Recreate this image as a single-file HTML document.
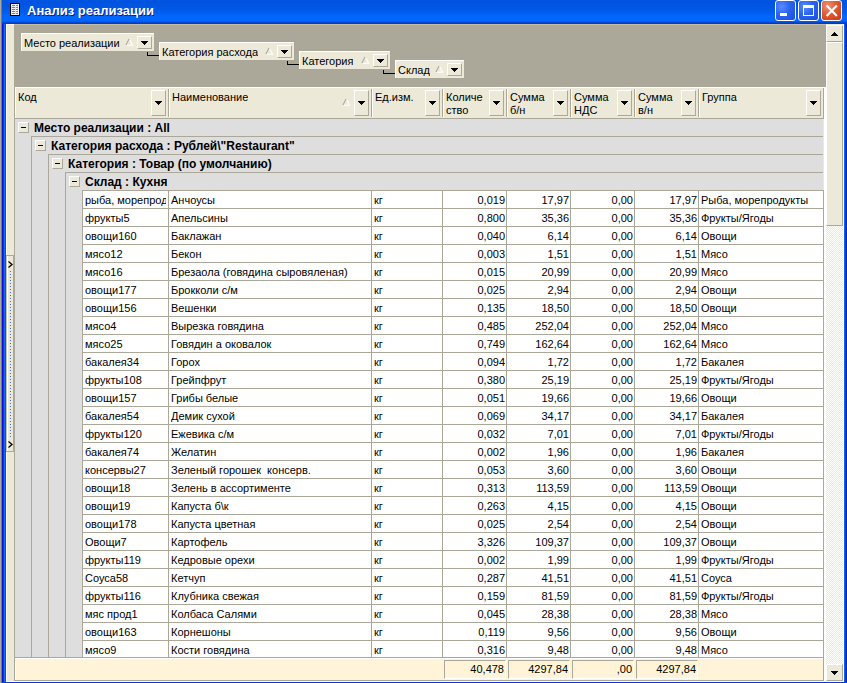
<!DOCTYPE html>
<html><head><meta charset="utf-8"><title>Анализ реализации</title>
<style>
html,body{margin:0;padding:0}
body{width:847px;height:683px;overflow:hidden;position:relative;background:#ACA899;font-family:"Liberation Sans",sans-serif;font-size:11px;color:#000}
.a{position:absolute}
.t{position:absolute;white-space:nowrap;overflow:hidden;line-height:12px;height:auto}
.title{font-weight:bold;font-size:13px;line-height:15px;letter-spacing:0px;color:#fff;text-shadow:1px 1px 0 #0A1E8C}
</style></head><body>
<div class="a" style="left:2px;top:0px;width:845px;height:683px;background:#0054E3"></div>
<div class="a" style="left:1px;top:0px;width:1px;height:683px;background:#807A62"></div>
<div class="a" style="left:2px;top:24px;width:1px;height:659px;background:#0414DC"></div>
<div class="a" style="left:3px;top:24px;width:1px;height:659px;background:#0838E4"></div>
<div class="a" style="left:4px;top:24px;width:1px;height:659px;background:#1868F2"></div>
<div class="a" style="left:5px;top:24px;width:1px;height:659px;background:#0650E0"></div>
<div class="a" style="left:844px;top:24px;width:1px;height:659px;background:#1464F4"></div>
<div class="a" style="left:845px;top:24px;width:1px;height:659px;background:#0840D8"></div>
<div class="a" style="left:846px;top:24px;width:1px;height:659px;background:#0A28A8"></div>
<div class="a" style="left:2px;top:682px;width:845px;height:1px;background:#0838D8"></div>
<div class="a" style="left:2px;top:0px;width:845px;height:24px;background:linear-gradient(to bottom,#0058E6 0px,#0053DE 1.5px,#0055E0 5px,#005EEE 13px,#0066FF 16px,#0066FF 21px,#0050E0 22px,#003EC8 23px,#003CC4 24px)"></div>
<svg class="a" style="left:10px;top:3px" width="10" height="13" viewBox="0 0 10 13" shape-rendering="crispEdges">
<rect x="0" y="0" width="10" height="13" fill="#000"/>
<rect x="1" y="1" width="8" height="11" fill="#FFFF00"/>
<rect x="8" y="1" width="1" height="11" fill="#FFF"/>
<path d="M1 2h1M3 2h1M5 2h1M7 2h1M2 1h1M4 1h1M6 1h1M2 3h1M4 3h1M6 3h1M2 5h1M4 5h1M6 5h1M2 7h1M4 7h1M6 7h1M2 9h1M4 9h1M6 9h1M2 11h1M4 11h1M6 11h1" stroke="#FFF" stroke-width="1" transform="translate(0,0.5)"/>
<path d="M2 2h3M6 2h2M2 4h3M6 4h2M2 6h3M6 6h2M2 8h3M6 8h2M2 10h3M6 10h2" stroke="#808080" stroke-width="1" transform="translate(0,0.5)"/>
</svg>
<div class="t title" style="left:27px;top:3px">Анализ реализации</div>
<div class="a" style="left:775px;top:0px;width:21px;height:21px;box-sizing:border-box;border:1px solid #fff;border-radius:3px;background:radial-gradient(circle at 30% 30%,#5A8CFF 0,#2A62F0 45%,#1F4FD8 100%)"></div>
<div class="a" style="left:798px;top:0px;width:21px;height:21px;box-sizing:border-box;border:1px solid #fff;border-radius:3px;background:radial-gradient(circle at 30% 30%,#5A8CFF 0,#2A62F0 45%,#1F4FD8 100%)"></div>
<div class="a" style="left:821px;top:0px;width:21px;height:21px;box-sizing:border-box;border:1px solid #fff;border-radius:3px;background:radial-gradient(circle at 30% 25%,#F09070 0,#E05A30 45%,#C83A10 100%)"></div>
<div class="a" style="left:780px;top:13px;width:7px;height:3px;background:#fff"></div>
<div class="a" style="left:803px;top:5px;width:11px;height:11px;box-sizing:border-box;border:1px solid #fff;border-top-width:3px"></div>
<svg class="a" style="left:825px;top:4px" width="13" height="13" viewBox="0 0 13 13"><path d="M1.6 1.6L11.9 11.9M11.9 1.6L1.6 11.9" stroke="#fff" stroke-width="2.1"/></svg>
<div class="a" style="left:6px;top:24px;width:838px;height:658px;background:#ECE9D8"></div>
<div class="a" style="left:6px;top:24px;width:838px;height:1px;background:#C4BCA6"></div>
<div class="a" style="left:6px;top:24px;width:8px;height:1px;background:#FFF8E4"></div>
<div class="a" style="left:826px;top:24px;width:18px;height:1px;background:#ECE9D8"></div>
<div class="a" style="left:6px;top:24px;width:1px;height:658px;background:#FFF8E4"></div>
<div class="a" style="left:843px;top:24px;width:1px;height:658px;background:#FFFFFF"></div>
<div class="a" style="left:6px;top:681px;width:838px;height:1px;background:#FFFFFF"></div>
<div class="a" style="left:6px;top:255px;width:8px;height:197px;box-sizing:border-box;border-top:1px solid #ACA899;border-bottom:1px solid #ACA899;"></div>
<div class="a" style="left:6px;top:256px;width:1px;height:195px;background:#C9C2AC"></div>
<div class="a" style="left:7px;top:256px;width:1px;height:195px;background:#fff"></div>
<div class="a" style="left:13px;top:256px;width:1px;height:195px;background:#ACA899"></div>
<svg class="a" style="left:8px;top:261px" width="5" height="7"><path d="M0.5 0.5L4 3.5L0.5 6.5" fill="none" stroke="#000" stroke-width="1.3"/></svg>
<svg class="a" style="left:8px;top:441px" width="5" height="7"><path d="M0.5 0.5L4 3.5L0.5 6.5" fill="none" stroke="#000" stroke-width="1.3"/></svg>
<svg class="a" style="left:10px;top:271px" width="1" height="168" shape-rendering="crispEdges"><rect x="0" y="0" width="1" height="1" fill="#3070E0"/><rect x="0" y="3" width="1" height="1" fill="#3070E0"/><rect x="0" y="6" width="1" height="1" fill="#3070E0"/><rect x="0" y="9" width="1" height="1" fill="#3070E0"/><rect x="0" y="12" width="1" height="1" fill="#3070E0"/><rect x="0" y="15" width="1" height="1" fill="#3070E0"/><rect x="0" y="18" width="1" height="1" fill="#3070E0"/><rect x="0" y="21" width="1" height="1" fill="#3070E0"/><rect x="0" y="24" width="1" height="1" fill="#3070E0"/><rect x="0" y="27" width="1" height="1" fill="#3070E0"/><rect x="0" y="30" width="1" height="1" fill="#3070E0"/><rect x="0" y="33" width="1" height="1" fill="#3070E0"/><rect x="0" y="36" width="1" height="1" fill="#3070E0"/><rect x="0" y="39" width="1" height="1" fill="#3070E0"/><rect x="0" y="42" width="1" height="1" fill="#3070E0"/><rect x="0" y="45" width="1" height="1" fill="#3070E0"/><rect x="0" y="48" width="1" height="1" fill="#3070E0"/><rect x="0" y="51" width="1" height="1" fill="#3070E0"/><rect x="0" y="54" width="1" height="1" fill="#3070E0"/><rect x="0" y="57" width="1" height="1" fill="#3070E0"/><rect x="0" y="60" width="1" height="1" fill="#3070E0"/><rect x="0" y="63" width="1" height="1" fill="#3070E0"/><rect x="0" y="66" width="1" height="1" fill="#3070E0"/><rect x="0" y="69" width="1" height="1" fill="#3070E0"/><rect x="0" y="72" width="1" height="1" fill="#3070E0"/><rect x="0" y="75" width="1" height="1" fill="#3070E0"/><rect x="0" y="78" width="1" height="1" fill="#3070E0"/><rect x="0" y="81" width="1" height="1" fill="#3070E0"/><rect x="0" y="84" width="1" height="1" fill="#3070E0"/><rect x="0" y="87" width="1" height="1" fill="#3070E0"/><rect x="0" y="90" width="1" height="1" fill="#3070E0"/><rect x="0" y="93" width="1" height="1" fill="#3070E0"/><rect x="0" y="96" width="1" height="1" fill="#3070E0"/><rect x="0" y="99" width="1" height="1" fill="#3070E0"/><rect x="0" y="102" width="1" height="1" fill="#3070E0"/><rect x="0" y="105" width="1" height="1" fill="#3070E0"/><rect x="0" y="108" width="1" height="1" fill="#3070E0"/><rect x="0" y="111" width="1" height="1" fill="#3070E0"/><rect x="0" y="114" width="1" height="1" fill="#3070E0"/><rect x="0" y="117" width="1" height="1" fill="#3070E0"/><rect x="0" y="120" width="1" height="1" fill="#3070E0"/><rect x="0" y="123" width="1" height="1" fill="#3070E0"/><rect x="0" y="126" width="1" height="1" fill="#3070E0"/><rect x="0" y="129" width="1" height="1" fill="#3070E0"/><rect x="0" y="132" width="1" height="1" fill="#3070E0"/><rect x="0" y="135" width="1" height="1" fill="#3070E0"/><rect x="0" y="138" width="1" height="1" fill="#3070E0"/><rect x="0" y="141" width="1" height="1" fill="#3070E0"/><rect x="0" y="144" width="1" height="1" fill="#3070E0"/><rect x="0" y="147" width="1" height="1" fill="#3070E0"/><rect x="0" y="150" width="1" height="1" fill="#3070E0"/><rect x="0" y="153" width="1" height="1" fill="#3070E0"/><rect x="0" y="156" width="1" height="1" fill="#3070E0"/><rect x="0" y="159" width="1" height="1" fill="#3070E0"/><rect x="0" y="162" width="1" height="1" fill="#3070E0"/><rect x="0" y="165" width="1" height="1" fill="#3070E0"/></svg>
<div class="a" style="left:14px;top:25px;width:812px;height:62px;background:#ACA899"></div>
<div class="a" style="left:21px;top:33px;width:133px;height:18px;box-sizing:border-box;background:#ECE9D8;border-left:1px solid #fff;border-top:1px solid #fff"></div>
<div class="t" style="left:24px;top:37px;">Место реализации</div>
<div class="a" style="left:137px;top:36px;width:15px;height:13px;box-sizing:border-box;background:#ECE9D8;border-left:1px solid #fff;border-top:1px solid #fff;border-right:1px solid #ACA899;border-bottom:1px solid #ACA899"></div>
<svg class="a" style="left:141px;top:41px" width="7" height="4" shape-rendering="crispEdges"><path d="M0 0h7v1h-1v1h-1v1h-1v1h-1v-1h-1v-1h-1v-1h-1z" fill="#000"/></svg>
<svg class="a" style="left:125px;top:38px" width="9" height="8"><path d="M4.2 0.8L7.6 7.2H0.8Z" fill="none" stroke="#fff" stroke-width="1.1"/><path d="M4.2 0.8L0.8 7.2" stroke="#A8A498" stroke-width="1.1"/></svg>
<div class="a" style="left:147px;top:52px;width:1px;height:4px;background:#000"></div>
<div class="a" style="left:147px;top:55px;width:12px;height:1px;background:#000"></div>
<div class="a" style="left:159px;top:42px;width:135px;height:18px;box-sizing:border-box;background:#ECE9D8;border-left:1px solid #fff;border-top:1px solid #fff"></div>
<div class="t" style="left:162px;top:46px;">Категория расхода</div>
<div class="a" style="left:277px;top:45px;width:15px;height:13px;box-sizing:border-box;background:#ECE9D8;border-left:1px solid #fff;border-top:1px solid #fff;border-right:1px solid #ACA899;border-bottom:1px solid #ACA899"></div>
<svg class="a" style="left:281px;top:50px" width="7" height="4" shape-rendering="crispEdges"><path d="M0 0h7v1h-1v1h-1v1h-1v1h-1v-1h-1v-1h-1v-1h-1z" fill="#000"/></svg>
<svg class="a" style="left:265px;top:47px" width="9" height="8"><path d="M4.2 0.8L7.6 7.2H0.8Z" fill="none" stroke="#fff" stroke-width="1.1"/><path d="M4.2 0.8L0.8 7.2" stroke="#A8A498" stroke-width="1.1"/></svg>
<div class="a" style="left:287px;top:61px;width:1px;height:4px;background:#000"></div>
<div class="a" style="left:287px;top:64px;width:12px;height:1px;background:#000"></div>
<div class="a" style="left:299px;top:51px;width:91px;height:18px;box-sizing:border-box;background:#ECE9D8;border-left:1px solid #fff;border-top:1px solid #fff"></div>
<div class="t" style="left:302px;top:55px;">Категория</div>
<div class="a" style="left:373px;top:54px;width:15px;height:13px;box-sizing:border-box;background:#ECE9D8;border-left:1px solid #fff;border-top:1px solid #fff;border-right:1px solid #ACA899;border-bottom:1px solid #ACA899"></div>
<svg class="a" style="left:377px;top:59px" width="7" height="4" shape-rendering="crispEdges"><path d="M0 0h7v1h-1v1h-1v1h-1v1h-1v-1h-1v-1h-1v-1h-1z" fill="#000"/></svg>
<svg class="a" style="left:361px;top:56px" width="9" height="8"><path d="M4.2 0.8L7.6 7.2H0.8Z" fill="none" stroke="#fff" stroke-width="1.1"/><path d="M4.2 0.8L0.8 7.2" stroke="#A8A498" stroke-width="1.1"/></svg>
<div class="a" style="left:383px;top:70px;width:1px;height:4px;background:#000"></div>
<div class="a" style="left:383px;top:73px;width:12px;height:1px;background:#000"></div>
<div class="a" style="left:395px;top:60px;width:69px;height:18px;box-sizing:border-box;background:#ECE9D8;border-left:1px solid #fff;border-top:1px solid #fff"></div>
<div class="t" style="left:398px;top:64px;">Склад</div>
<div class="a" style="left:447px;top:63px;width:15px;height:13px;box-sizing:border-box;background:#ECE9D8;border-left:1px solid #fff;border-top:1px solid #fff;border-right:1px solid #ACA899;border-bottom:1px solid #ACA899"></div>
<svg class="a" style="left:451px;top:68px" width="7" height="4" shape-rendering="crispEdges"><path d="M0 0h7v1h-1v1h-1v1h-1v1h-1v-1h-1v-1h-1v-1h-1z" fill="#000"/></svg>
<svg class="a" style="left:435px;top:65px" width="9" height="8"><path d="M4.2 0.8L7.6 7.2H0.8Z" fill="none" stroke="#fff" stroke-width="1.1"/><path d="M4.2 0.8L0.8 7.2" stroke="#A8A498" stroke-width="1.1"/></svg>
<div class="a" style="left:14px;top:87px;width:1px;height:594px;background:#ACA899"></div>
<div class="a" style="left:15px;top:87px;width:809px;height:31px;background:#ECE9D8"></div>
<div class="a" style="left:15px;top:87px;width:811px;height:1px;background:#fff"></div>
<div class="a" style="left:15px;top:87px;width:1px;height:31px;background:#fff"></div>
<div class="a" style="left:14px;top:118px;width:810px;height:1px;background:#ACA899"></div>
<div class="a" style="left:824px;top:87px;width:2px;height:594px;background:#fff"></div>
<div class="t" style="left:18px;top:91px;line-height:13px">Код</div>
<div class="a" style="left:151px;top:90px;width:15px;height:26px;box-sizing:border-box;background:#ECE9D8;border-left:1px solid #fff;border-top:1px solid #fff;border-right:1px solid #ACA899;border-bottom:1px solid #ACA899"></div>
<svg class="a" style="left:155px;top:101px" width="7" height="4" shape-rendering="crispEdges"><path d="M0 0h7v1h-1v1h-1v1h-1v1h-1v-1h-1v-1h-1v-1h-1z" fill="#000"/></svg>
<div class="a" style="left:168px;top:89px;width:1px;height:28px;background:#ACA899"></div>
<div class="a" style="left:169px;top:89px;width:1px;height:28px;background:#fff"></div>
<div class="t" style="left:172px;top:91px;line-height:13px">Наименование</div>
<div class="a" style="left:354px;top:90px;width:15px;height:26px;box-sizing:border-box;background:#ECE9D8;border-left:1px solid #fff;border-top:1px solid #fff;border-right:1px solid #ACA899;border-bottom:1px solid #ACA899"></div>
<svg class="a" style="left:358px;top:101px" width="7" height="4" shape-rendering="crispEdges"><path d="M0 0h7v1h-1v1h-1v1h-1v1h-1v-1h-1v-1h-1v-1h-1z" fill="#000"/></svg>
<div class="a" style="left:371px;top:89px;width:1px;height:28px;background:#ACA899"></div>
<div class="a" style="left:372px;top:89px;width:1px;height:28px;background:#fff"></div>
<div class="t" style="left:375px;top:91px;line-height:13px">Ед.изм.</div>
<div class="a" style="left:425px;top:90px;width:15px;height:26px;box-sizing:border-box;background:#ECE9D8;border-left:1px solid #fff;border-top:1px solid #fff;border-right:1px solid #ACA899;border-bottom:1px solid #ACA899"></div>
<svg class="a" style="left:429px;top:101px" width="7" height="4" shape-rendering="crispEdges"><path d="M0 0h7v1h-1v1h-1v1h-1v1h-1v-1h-1v-1h-1v-1h-1z" fill="#000"/></svg>
<div class="a" style="left:442px;top:89px;width:1px;height:28px;background:#ACA899"></div>
<div class="a" style="left:443px;top:89px;width:1px;height:28px;background:#fff"></div>
<div class="t" style="left:446px;top:91px;line-height:13px">Количе<br>ство</div>
<div class="a" style="left:489px;top:90px;width:15px;height:26px;box-sizing:border-box;background:#ECE9D8;border-left:1px solid #fff;border-top:1px solid #fff;border-right:1px solid #ACA899;border-bottom:1px solid #ACA899"></div>
<svg class="a" style="left:493px;top:101px" width="7" height="4" shape-rendering="crispEdges"><path d="M0 0h7v1h-1v1h-1v1h-1v1h-1v-1h-1v-1h-1v-1h-1z" fill="#000"/></svg>
<div class="a" style="left:506px;top:89px;width:1px;height:28px;background:#ACA899"></div>
<div class="a" style="left:507px;top:89px;width:1px;height:28px;background:#fff"></div>
<div class="t" style="left:510px;top:91px;line-height:13px">Сумма<br>б/н</div>
<div class="a" style="left:553px;top:90px;width:15px;height:26px;box-sizing:border-box;background:#ECE9D8;border-left:1px solid #fff;border-top:1px solid #fff;border-right:1px solid #ACA899;border-bottom:1px solid #ACA899"></div>
<svg class="a" style="left:557px;top:101px" width="7" height="4" shape-rendering="crispEdges"><path d="M0 0h7v1h-1v1h-1v1h-1v1h-1v-1h-1v-1h-1v-1h-1z" fill="#000"/></svg>
<div class="a" style="left:570px;top:89px;width:1px;height:28px;background:#ACA899"></div>
<div class="a" style="left:571px;top:89px;width:1px;height:28px;background:#fff"></div>
<div class="t" style="left:574px;top:91px;line-height:13px">Сумма<br>НДС</div>
<div class="a" style="left:617px;top:90px;width:15px;height:26px;box-sizing:border-box;background:#ECE9D8;border-left:1px solid #fff;border-top:1px solid #fff;border-right:1px solid #ACA899;border-bottom:1px solid #ACA899"></div>
<svg class="a" style="left:621px;top:101px" width="7" height="4" shape-rendering="crispEdges"><path d="M0 0h7v1h-1v1h-1v1h-1v1h-1v-1h-1v-1h-1v-1h-1z" fill="#000"/></svg>
<div class="a" style="left:634px;top:89px;width:1px;height:28px;background:#ACA899"></div>
<div class="a" style="left:635px;top:89px;width:1px;height:28px;background:#fff"></div>
<div class="t" style="left:638px;top:91px;line-height:13px">Сумма<br>в/н</div>
<div class="a" style="left:681px;top:90px;width:15px;height:26px;box-sizing:border-box;background:#ECE9D8;border-left:1px solid #fff;border-top:1px solid #fff;border-right:1px solid #ACA899;border-bottom:1px solid #ACA899"></div>
<svg class="a" style="left:685px;top:101px" width="7" height="4" shape-rendering="crispEdges"><path d="M0 0h7v1h-1v1h-1v1h-1v1h-1v-1h-1v-1h-1v-1h-1z" fill="#000"/></svg>
<div class="a" style="left:698px;top:89px;width:1px;height:28px;background:#ACA899"></div>
<div class="a" style="left:699px;top:89px;width:1px;height:28px;background:#fff"></div>
<div class="t" style="left:702px;top:91px;line-height:13px">Группа</div>
<div class="a" style="left:806px;top:90px;width:15px;height:26px;box-sizing:border-box;background:#ECE9D8;border-left:1px solid #fff;border-top:1px solid #fff;border-right:1px solid #ACA899;border-bottom:1px solid #ACA899"></div>
<svg class="a" style="left:810px;top:101px" width="7" height="4" shape-rendering="crispEdges"><path d="M0 0h7v1h-1v1h-1v1h-1v1h-1v-1h-1v-1h-1v-1h-1z" fill="#000"/></svg>
<div class="a" style="left:823px;top:88px;width:1px;height:30px;background:#ACA899"></div>
<svg class="a" style="left:342px;top:98px" width="9" height="8"><path d="M4.2 0.8L7.6 7.2H0.8Z" fill="none" stroke="#fff" stroke-width="1.1"/><path d="M4.2 0.8L0.8 7.2" stroke="#A8A498" stroke-width="1.1"/></svg>
<div class="a" style="left:15px;top:119px;width:808px;height:538px;background:#DEDEDE"></div>
<div class="a" style="left:18px;top:122px;width:11px;height:11px;box-sizing:border-box;background:#ECE9D8;border-left:1px solid #fff;border-top:1px solid #fff;border-right:1px solid #ACA899;border-bottom:1px solid #ACA899"></div>
<div class="a" style="left:21px;top:127px;width:5px;height:1px;background:#000"></div>
<div class="t" style="left:34px;top:122px;font-weight:bold;font-size:12px;line-height:13px">Место реализации : All</div>
<div class="a" style="left:31px;top:136px;width:792px;height:1px;background:#ACA899"></div>
<div class="a" style="left:31px;top:136px;width:1px;height:521px;background:#ACA899"></div>
<div class="a" style="left:35px;top:140px;width:11px;height:11px;box-sizing:border-box;background:#ECE9D8;border-left:1px solid #fff;border-top:1px solid #fff;border-right:1px solid #ACA899;border-bottom:1px solid #ACA899"></div>
<div class="a" style="left:38px;top:145px;width:5px;height:1px;background:#000"></div>
<div class="t" style="left:51px;top:140px;font-weight:bold;font-size:12px;line-height:13px">Категория расхода : Рублей\"Restaurant"</div>
<div class="a" style="left:48px;top:154px;width:775px;height:1px;background:#ACA899"></div>
<div class="a" style="left:48px;top:154px;width:1px;height:503px;background:#ACA899"></div>
<div class="a" style="left:52px;top:158px;width:11px;height:11px;box-sizing:border-box;background:#ECE9D8;border-left:1px solid #fff;border-top:1px solid #fff;border-right:1px solid #ACA899;border-bottom:1px solid #ACA899"></div>
<div class="a" style="left:55px;top:163px;width:5px;height:1px;background:#000"></div>
<div class="t" style="left:68px;top:158px;font-weight:bold;font-size:12px;line-height:13px">Категория : Товар (по умолчанию)</div>
<div class="a" style="left:65px;top:172px;width:758px;height:1px;background:#ACA899"></div>
<div class="a" style="left:65px;top:172px;width:1px;height:485px;background:#ACA899"></div>
<div class="a" style="left:69px;top:176px;width:11px;height:11px;box-sizing:border-box;background:#ECE9D8;border-left:1px solid #fff;border-top:1px solid #fff;border-right:1px solid #ACA899;border-bottom:1px solid #ACA899"></div>
<div class="a" style="left:72px;top:181px;width:5px;height:1px;background:#000"></div>
<div class="t" style="left:85px;top:176px;font-weight:bold;font-size:12px;line-height:13px">Склад : Кухня</div>
<div class="a" style="left:83px;top:191px;width:740px;height:466px;background:#fff"></div>
<div class="a" style="left:82px;top:190px;width:1px;height:467px;background:#ACA899"></div>
<div class="a" style="left:82px;top:190px;width:741px;height:1px;background:#ACA899"></div>
<div class="a" style="left:82px;top:208px;width:741px;height:1px;background:#ACA899"></div>
<div class="a" style="left:82px;top:226px;width:741px;height:1px;background:#ACA899"></div>
<div class="a" style="left:82px;top:244px;width:741px;height:1px;background:#ACA899"></div>
<div class="a" style="left:82px;top:262px;width:741px;height:1px;background:#ACA899"></div>
<div class="a" style="left:82px;top:280px;width:741px;height:1px;background:#ACA899"></div>
<div class="a" style="left:82px;top:298px;width:741px;height:1px;background:#ACA899"></div>
<div class="a" style="left:82px;top:316px;width:741px;height:1px;background:#ACA899"></div>
<div class="a" style="left:82px;top:334px;width:741px;height:1px;background:#ACA899"></div>
<div class="a" style="left:82px;top:352px;width:741px;height:1px;background:#ACA899"></div>
<div class="a" style="left:82px;top:370px;width:741px;height:1px;background:#ACA899"></div>
<div class="a" style="left:82px;top:388px;width:741px;height:1px;background:#ACA899"></div>
<div class="a" style="left:82px;top:406px;width:741px;height:1px;background:#ACA899"></div>
<div class="a" style="left:82px;top:424px;width:741px;height:1px;background:#ACA899"></div>
<div class="a" style="left:82px;top:442px;width:741px;height:1px;background:#ACA899"></div>
<div class="a" style="left:82px;top:460px;width:741px;height:1px;background:#ACA899"></div>
<div class="a" style="left:82px;top:478px;width:741px;height:1px;background:#ACA899"></div>
<div class="a" style="left:82px;top:496px;width:741px;height:1px;background:#ACA899"></div>
<div class="a" style="left:82px;top:514px;width:741px;height:1px;background:#ACA899"></div>
<div class="a" style="left:82px;top:532px;width:741px;height:1px;background:#ACA899"></div>
<div class="a" style="left:82px;top:550px;width:741px;height:1px;background:#ACA899"></div>
<div class="a" style="left:82px;top:568px;width:741px;height:1px;background:#ACA899"></div>
<div class="a" style="left:82px;top:586px;width:741px;height:1px;background:#ACA899"></div>
<div class="a" style="left:82px;top:604px;width:741px;height:1px;background:#ACA899"></div>
<div class="a" style="left:82px;top:622px;width:741px;height:1px;background:#ACA899"></div>
<div class="a" style="left:82px;top:640px;width:741px;height:1px;background:#ACA899"></div>
<div class="a" style="left:168px;top:190px;width:1px;height:467px;background:#ACA899"></div>
<div class="a" style="left:371px;top:190px;width:1px;height:467px;background:#ACA899"></div>
<div class="a" style="left:442px;top:190px;width:1px;height:467px;background:#ACA899"></div>
<div class="a" style="left:506px;top:190px;width:1px;height:467px;background:#ACA899"></div>
<div class="a" style="left:570px;top:190px;width:1px;height:467px;background:#ACA899"></div>
<div class="a" style="left:634px;top:190px;width:1px;height:467px;background:#ACA899"></div>
<div class="a" style="left:698px;top:190px;width:1px;height:467px;background:#ACA899"></div>
<div class="a" style="left:823px;top:190px;width:1px;height:467px;background:#ACA899"></div>
<div class="t" style="left:85px;top:194px;width:81px;">рыба, морепродукты</div>
<div class="t" style="left:171px;top:194px;width:199px;">Анчоусы</div>
<div class="t" style="left:374px;top:194px;width:67px;">кг</div>
<div class="t" style="left:443px;top:194px;width:62px;text-align:right">0,019</div>
<div class="t" style="left:507px;top:194px;width:62px;text-align:right">17,97</div>
<div class="t" style="left:571px;top:194px;width:62px;text-align:right">0,00</div>
<div class="t" style="left:635px;top:194px;width:62px;text-align:right">17,97</div>
<div class="t" style="left:701px;top:194px;width:122px;">Рыба, морепродукты</div>
<div class="t" style="left:85px;top:212px;width:81px;">фрукты5</div>
<div class="t" style="left:171px;top:212px;width:199px;">Апельсины</div>
<div class="t" style="left:374px;top:212px;width:67px;">кг</div>
<div class="t" style="left:443px;top:212px;width:62px;text-align:right">0,800</div>
<div class="t" style="left:507px;top:212px;width:62px;text-align:right">35,36</div>
<div class="t" style="left:571px;top:212px;width:62px;text-align:right">0,00</div>
<div class="t" style="left:635px;top:212px;width:62px;text-align:right">35,36</div>
<div class="t" style="left:701px;top:212px;width:122px;">Фрукты/Ягоды</div>
<div class="t" style="left:85px;top:230px;width:81px;">овощи160</div>
<div class="t" style="left:171px;top:230px;width:199px;">Баклажан</div>
<div class="t" style="left:374px;top:230px;width:67px;">кг</div>
<div class="t" style="left:443px;top:230px;width:62px;text-align:right">0,040</div>
<div class="t" style="left:507px;top:230px;width:62px;text-align:right">6,14</div>
<div class="t" style="left:571px;top:230px;width:62px;text-align:right">0,00</div>
<div class="t" style="left:635px;top:230px;width:62px;text-align:right">6,14</div>
<div class="t" style="left:701px;top:230px;width:122px;">Овощи</div>
<div class="t" style="left:85px;top:248px;width:81px;">мясо12</div>
<div class="t" style="left:171px;top:248px;width:199px;">Бекон</div>
<div class="t" style="left:374px;top:248px;width:67px;">кг</div>
<div class="t" style="left:443px;top:248px;width:62px;text-align:right">0,003</div>
<div class="t" style="left:507px;top:248px;width:62px;text-align:right">1,51</div>
<div class="t" style="left:571px;top:248px;width:62px;text-align:right">0,00</div>
<div class="t" style="left:635px;top:248px;width:62px;text-align:right">1,51</div>
<div class="t" style="left:701px;top:248px;width:122px;">Мясо</div>
<div class="t" style="left:85px;top:266px;width:81px;">мясо16</div>
<div class="t" style="left:171px;top:266px;width:199px;">Брезаола (говядина сыровяленая)</div>
<div class="t" style="left:374px;top:266px;width:67px;">кг</div>
<div class="t" style="left:443px;top:266px;width:62px;text-align:right">0,015</div>
<div class="t" style="left:507px;top:266px;width:62px;text-align:right">20,99</div>
<div class="t" style="left:571px;top:266px;width:62px;text-align:right">0,00</div>
<div class="t" style="left:635px;top:266px;width:62px;text-align:right">20,99</div>
<div class="t" style="left:701px;top:266px;width:122px;">Мясо</div>
<div class="t" style="left:85px;top:284px;width:81px;">овощи177</div>
<div class="t" style="left:171px;top:284px;width:199px;">Брокколи с/м</div>
<div class="t" style="left:374px;top:284px;width:67px;">кг</div>
<div class="t" style="left:443px;top:284px;width:62px;text-align:right">0,025</div>
<div class="t" style="left:507px;top:284px;width:62px;text-align:right">2,94</div>
<div class="t" style="left:571px;top:284px;width:62px;text-align:right">0,00</div>
<div class="t" style="left:635px;top:284px;width:62px;text-align:right">2,94</div>
<div class="t" style="left:701px;top:284px;width:122px;">Овощи</div>
<div class="t" style="left:85px;top:302px;width:81px;">овощи156</div>
<div class="t" style="left:171px;top:302px;width:199px;">Вешенки</div>
<div class="t" style="left:374px;top:302px;width:67px;">кг</div>
<div class="t" style="left:443px;top:302px;width:62px;text-align:right">0,135</div>
<div class="t" style="left:507px;top:302px;width:62px;text-align:right">18,50</div>
<div class="t" style="left:571px;top:302px;width:62px;text-align:right">0,00</div>
<div class="t" style="left:635px;top:302px;width:62px;text-align:right">18,50</div>
<div class="t" style="left:701px;top:302px;width:122px;">Овощи</div>
<div class="t" style="left:85px;top:320px;width:81px;">мясо4</div>
<div class="t" style="left:171px;top:320px;width:199px;">Вырезка говядина</div>
<div class="t" style="left:374px;top:320px;width:67px;">кг</div>
<div class="t" style="left:443px;top:320px;width:62px;text-align:right">0,485</div>
<div class="t" style="left:507px;top:320px;width:62px;text-align:right">252,04</div>
<div class="t" style="left:571px;top:320px;width:62px;text-align:right">0,00</div>
<div class="t" style="left:635px;top:320px;width:62px;text-align:right">252,04</div>
<div class="t" style="left:701px;top:320px;width:122px;">Мясо</div>
<div class="t" style="left:85px;top:338px;width:81px;">мясо25</div>
<div class="t" style="left:171px;top:338px;width:199px;">Говядин а оковалок</div>
<div class="t" style="left:374px;top:338px;width:67px;">кг</div>
<div class="t" style="left:443px;top:338px;width:62px;text-align:right">0,749</div>
<div class="t" style="left:507px;top:338px;width:62px;text-align:right">162,64</div>
<div class="t" style="left:571px;top:338px;width:62px;text-align:right">0,00</div>
<div class="t" style="left:635px;top:338px;width:62px;text-align:right">162,64</div>
<div class="t" style="left:701px;top:338px;width:122px;">Мясо</div>
<div class="t" style="left:85px;top:356px;width:81px;">бакалея34</div>
<div class="t" style="left:171px;top:356px;width:199px;">Горох</div>
<div class="t" style="left:374px;top:356px;width:67px;">кг</div>
<div class="t" style="left:443px;top:356px;width:62px;text-align:right">0,094</div>
<div class="t" style="left:507px;top:356px;width:62px;text-align:right">1,72</div>
<div class="t" style="left:571px;top:356px;width:62px;text-align:right">0,00</div>
<div class="t" style="left:635px;top:356px;width:62px;text-align:right">1,72</div>
<div class="t" style="left:701px;top:356px;width:122px;">Бакалея</div>
<div class="t" style="left:85px;top:374px;width:81px;">фрукты108</div>
<div class="t" style="left:171px;top:374px;width:199px;">Грейпфрут</div>
<div class="t" style="left:374px;top:374px;width:67px;">кг</div>
<div class="t" style="left:443px;top:374px;width:62px;text-align:right">0,380</div>
<div class="t" style="left:507px;top:374px;width:62px;text-align:right">25,19</div>
<div class="t" style="left:571px;top:374px;width:62px;text-align:right">0,00</div>
<div class="t" style="left:635px;top:374px;width:62px;text-align:right">25,19</div>
<div class="t" style="left:701px;top:374px;width:122px;">Фрукты/Ягоды</div>
<div class="t" style="left:85px;top:392px;width:81px;">овощи157</div>
<div class="t" style="left:171px;top:392px;width:199px;">Грибы белые</div>
<div class="t" style="left:374px;top:392px;width:67px;">кг</div>
<div class="t" style="left:443px;top:392px;width:62px;text-align:right">0,051</div>
<div class="t" style="left:507px;top:392px;width:62px;text-align:right">19,66</div>
<div class="t" style="left:571px;top:392px;width:62px;text-align:right">0,00</div>
<div class="t" style="left:635px;top:392px;width:62px;text-align:right">19,66</div>
<div class="t" style="left:701px;top:392px;width:122px;">Овощи</div>
<div class="t" style="left:85px;top:410px;width:81px;">бакалея54</div>
<div class="t" style="left:171px;top:410px;width:199px;">Демик сухой</div>
<div class="t" style="left:374px;top:410px;width:67px;">кг</div>
<div class="t" style="left:443px;top:410px;width:62px;text-align:right">0,069</div>
<div class="t" style="left:507px;top:410px;width:62px;text-align:right">34,17</div>
<div class="t" style="left:571px;top:410px;width:62px;text-align:right">0,00</div>
<div class="t" style="left:635px;top:410px;width:62px;text-align:right">34,17</div>
<div class="t" style="left:701px;top:410px;width:122px;">Бакалея</div>
<div class="t" style="left:85px;top:428px;width:81px;">фрукты120</div>
<div class="t" style="left:171px;top:428px;width:199px;">Ежевика с/м</div>
<div class="t" style="left:374px;top:428px;width:67px;">кг</div>
<div class="t" style="left:443px;top:428px;width:62px;text-align:right">0,032</div>
<div class="t" style="left:507px;top:428px;width:62px;text-align:right">7,01</div>
<div class="t" style="left:571px;top:428px;width:62px;text-align:right">0,00</div>
<div class="t" style="left:635px;top:428px;width:62px;text-align:right">7,01</div>
<div class="t" style="left:701px;top:428px;width:122px;">Фрукты/Ягоды</div>
<div class="t" style="left:85px;top:446px;width:81px;">бакалея74</div>
<div class="t" style="left:171px;top:446px;width:199px;">Желатин</div>
<div class="t" style="left:374px;top:446px;width:67px;">кг</div>
<div class="t" style="left:443px;top:446px;width:62px;text-align:right">0,002</div>
<div class="t" style="left:507px;top:446px;width:62px;text-align:right">1,96</div>
<div class="t" style="left:571px;top:446px;width:62px;text-align:right">0,00</div>
<div class="t" style="left:635px;top:446px;width:62px;text-align:right">1,96</div>
<div class="t" style="left:701px;top:446px;width:122px;">Бакалея</div>
<div class="t" style="left:85px;top:464px;width:81px;">консервы27</div>
<div class="t" style="left:171px;top:464px;width:199px;">Зеленый горошек&nbsp; консерв.</div>
<div class="t" style="left:374px;top:464px;width:67px;">кг</div>
<div class="t" style="left:443px;top:464px;width:62px;text-align:right">0,053</div>
<div class="t" style="left:507px;top:464px;width:62px;text-align:right">3,60</div>
<div class="t" style="left:571px;top:464px;width:62px;text-align:right">0,00</div>
<div class="t" style="left:635px;top:464px;width:62px;text-align:right">3,60</div>
<div class="t" style="left:701px;top:464px;width:122px;">Овощи</div>
<div class="t" style="left:85px;top:482px;width:81px;">овощи18</div>
<div class="t" style="left:171px;top:482px;width:199px;">Зелень в ассортименте</div>
<div class="t" style="left:374px;top:482px;width:67px;">кг</div>
<div class="t" style="left:443px;top:482px;width:62px;text-align:right">0,313</div>
<div class="t" style="left:507px;top:482px;width:62px;text-align:right">113,59</div>
<div class="t" style="left:571px;top:482px;width:62px;text-align:right">0,00</div>
<div class="t" style="left:635px;top:482px;width:62px;text-align:right">113,59</div>
<div class="t" style="left:701px;top:482px;width:122px;">Овощи</div>
<div class="t" style="left:85px;top:500px;width:81px;">овощи19</div>
<div class="t" style="left:171px;top:500px;width:199px;">Капуста б\к</div>
<div class="t" style="left:374px;top:500px;width:67px;">кг</div>
<div class="t" style="left:443px;top:500px;width:62px;text-align:right">0,263</div>
<div class="t" style="left:507px;top:500px;width:62px;text-align:right">4,15</div>
<div class="t" style="left:571px;top:500px;width:62px;text-align:right">0,00</div>
<div class="t" style="left:635px;top:500px;width:62px;text-align:right">4,15</div>
<div class="t" style="left:701px;top:500px;width:122px;">Овощи</div>
<div class="t" style="left:85px;top:518px;width:81px;">овощи178</div>
<div class="t" style="left:171px;top:518px;width:199px;">Капуста цветная</div>
<div class="t" style="left:374px;top:518px;width:67px;">кг</div>
<div class="t" style="left:443px;top:518px;width:62px;text-align:right">0,025</div>
<div class="t" style="left:507px;top:518px;width:62px;text-align:right">2,54</div>
<div class="t" style="left:571px;top:518px;width:62px;text-align:right">0,00</div>
<div class="t" style="left:635px;top:518px;width:62px;text-align:right">2,54</div>
<div class="t" style="left:701px;top:518px;width:122px;">Овощи</div>
<div class="t" style="left:85px;top:536px;width:81px;">Овощи7</div>
<div class="t" style="left:171px;top:536px;width:199px;">Картофель</div>
<div class="t" style="left:374px;top:536px;width:67px;">кг</div>
<div class="t" style="left:443px;top:536px;width:62px;text-align:right">3,326</div>
<div class="t" style="left:507px;top:536px;width:62px;text-align:right">109,37</div>
<div class="t" style="left:571px;top:536px;width:62px;text-align:right">0,00</div>
<div class="t" style="left:635px;top:536px;width:62px;text-align:right">109,37</div>
<div class="t" style="left:701px;top:536px;width:122px;">Овощи</div>
<div class="t" style="left:85px;top:554px;width:81px;">фрукты119</div>
<div class="t" style="left:171px;top:554px;width:199px;">Кедровые орехи</div>
<div class="t" style="left:374px;top:554px;width:67px;">кг</div>
<div class="t" style="left:443px;top:554px;width:62px;text-align:right">0,002</div>
<div class="t" style="left:507px;top:554px;width:62px;text-align:right">1,99</div>
<div class="t" style="left:571px;top:554px;width:62px;text-align:right">0,00</div>
<div class="t" style="left:635px;top:554px;width:62px;text-align:right">1,99</div>
<div class="t" style="left:701px;top:554px;width:122px;">Фрукты/Ягоды</div>
<div class="t" style="left:85px;top:572px;width:81px;">Соуса58</div>
<div class="t" style="left:171px;top:572px;width:199px;">Кетчуп</div>
<div class="t" style="left:374px;top:572px;width:67px;">кг</div>
<div class="t" style="left:443px;top:572px;width:62px;text-align:right">0,287</div>
<div class="t" style="left:507px;top:572px;width:62px;text-align:right">41,51</div>
<div class="t" style="left:571px;top:572px;width:62px;text-align:right">0,00</div>
<div class="t" style="left:635px;top:572px;width:62px;text-align:right">41,51</div>
<div class="t" style="left:701px;top:572px;width:122px;">Соуса</div>
<div class="t" style="left:85px;top:590px;width:81px;">фрукты116</div>
<div class="t" style="left:171px;top:590px;width:199px;">Клубника свежая</div>
<div class="t" style="left:374px;top:590px;width:67px;">кг</div>
<div class="t" style="left:443px;top:590px;width:62px;text-align:right">0,159</div>
<div class="t" style="left:507px;top:590px;width:62px;text-align:right">81,59</div>
<div class="t" style="left:571px;top:590px;width:62px;text-align:right">0,00</div>
<div class="t" style="left:635px;top:590px;width:62px;text-align:right">81,59</div>
<div class="t" style="left:701px;top:590px;width:122px;">Фрукты/Ягоды</div>
<div class="t" style="left:85px;top:608px;width:81px;">мяс прод1</div>
<div class="t" style="left:171px;top:608px;width:199px;">Колбаса Салями</div>
<div class="t" style="left:374px;top:608px;width:67px;">кг</div>
<div class="t" style="left:443px;top:608px;width:62px;text-align:right">0,045</div>
<div class="t" style="left:507px;top:608px;width:62px;text-align:right">28,38</div>
<div class="t" style="left:571px;top:608px;width:62px;text-align:right">0,00</div>
<div class="t" style="left:635px;top:608px;width:62px;text-align:right">28,38</div>
<div class="t" style="left:701px;top:608px;width:122px;">Мясо</div>
<div class="t" style="left:85px;top:626px;width:81px;">овощи163</div>
<div class="t" style="left:171px;top:626px;width:199px;">Корнешоны</div>
<div class="t" style="left:374px;top:626px;width:67px;">кг</div>
<div class="t" style="left:443px;top:626px;width:62px;text-align:right">0,119</div>
<div class="t" style="left:507px;top:626px;width:62px;text-align:right">9,56</div>
<div class="t" style="left:571px;top:626px;width:62px;text-align:right">0,00</div>
<div class="t" style="left:635px;top:626px;width:62px;text-align:right">9,56</div>
<div class="t" style="left:701px;top:626px;width:122px;">Овощи</div>
<div class="t" style="left:85px;top:644px;width:81px;">мясо9</div>
<div class="t" style="left:171px;top:644px;width:199px;">Кости говядина</div>
<div class="t" style="left:374px;top:644px;width:67px;">кг</div>
<div class="t" style="left:443px;top:644px;width:62px;text-align:right">0,316</div>
<div class="t" style="left:507px;top:644px;width:62px;text-align:right">9,48</div>
<div class="t" style="left:571px;top:644px;width:62px;text-align:right">0,00</div>
<div class="t" style="left:635px;top:644px;width:62px;text-align:right">9,48</div>
<div class="t" style="left:701px;top:644px;width:122px;">Мясо</div>
<div class="a" style="left:14px;top:657px;width:810px;height:1px;background:#ACA899"></div>
<div class="a" style="left:15px;top:658px;width:809px;height:22px;background:#FFF4D8"></div>
<div class="a" style="left:15px;top:658px;width:808px;height:1px;background:#fff"></div>
<div class="a" style="left:15px;top:658px;width:1px;height:22px;background:#fff"></div>
<div class="a" style="left:14px;top:680px;width:810px;height:1px;background:#ACA899"></div>
<div class="a" style="left:823px;top:657px;width:1px;height:24px;background:#ACA899"></div>
<div class="a" style="left:444px;top:660px;width:62px;height:19px;box-sizing:border-box;border-left:1px solid #ACA899;border-top:1px solid #ACA899;border-right:1px solid #fff;border-bottom:1px solid #fff"></div>
<div class="t" style="left:444px;top:663px;width:60px;text-align:right">40,478</div>
<div class="a" style="left:508px;top:660px;width:62px;height:19px;box-sizing:border-box;border-left:1px solid #ACA899;border-top:1px solid #ACA899;border-right:1px solid #fff;border-bottom:1px solid #fff"></div>
<div class="t" style="left:508px;top:663px;width:60px;text-align:right">4297,84</div>
<div class="a" style="left:572px;top:660px;width:62px;height:19px;box-sizing:border-box;border-left:1px solid #ACA899;border-top:1px solid #ACA899;border-right:1px solid #fff;border-bottom:1px solid #fff"></div>
<div class="t" style="left:572px;top:663px;width:60px;text-align:right">,00</div>
<div class="a" style="left:636px;top:660px;width:62px;height:19px;box-sizing:border-box;border-left:1px solid #ACA899;border-top:1px solid #ACA899;border-right:1px solid #fff;border-bottom:1px solid #fff"></div>
<div class="t" style="left:636px;top:663px;width:60px;text-align:right">4297,84</div>
<div class="a" style="left:826px;top:25px;width:17px;height:656px;background:repeating-conic-gradient(#FEFEFB 0 25%, #ECE9D8 0 50%) 0 0/2px 2px"></div>
<div class="a" style="left:826px;top:25px;width:17px;height:17px;box-sizing:border-box;background:#ECE9D8;border-left:1px solid #fff;border-top:1px solid #fff;border-right:1px solid #ACA899;border-bottom:1px solid #ACA899"></div>
<svg class="a" style="left:831px;top:32px" width="7" height="4" shape-rendering="crispEdges"><path d="M3 0h1v1h1v1h1v1h1v1h-7v-1h1v-1h1v-1h1z" fill="#000"/></svg>
<div class="a" style="left:826px;top:42px;width:17px;height:184px;box-sizing:border-box;background:#ECE9D8;border-left:1px solid #fff;border-top:1px solid #fff;border-right:1px solid #ACA899;border-bottom:1px solid #ACA899"></div>
<div class="a" style="left:826px;top:664px;width:17px;height:17px;box-sizing:border-box;background:#ECE9D8;border-left:1px solid #fff;border-top:1px solid #fff;border-right:1px solid #ACA899;border-bottom:1px solid #ACA899"></div>
<svg class="a" style="left:831px;top:671px" width="7" height="4" shape-rendering="crispEdges"><path d="M0 0h7v1h-1v1h-1v1h-1v1h-1v-1h-1v-1h-1v-1h-1z" fill="#000"/></svg>
</body></html>
